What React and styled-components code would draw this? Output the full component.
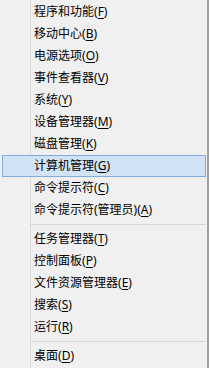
import React from 'react';
import styled, { createGlobalStyle } from 'styled-components';

const GlobalStyle = createGlobalStyle`
  html, body {
    margin: 0;
    padding: 0;
    background: #f0f0f0;
  }
`;

const Menu = styled.div`
  box-sizing: border-box;
  width: 209px;
  height: 368px;
  padding-top: 1px;
  overflow: hidden;
  border-right: 2px solid #a0a0a0;
  background:
    linear-gradient(to right, transparent 30px, #dcdcdc 30px, #dcdcdc 31px, transparent 31px),
    #f0f0f0;
  font-family: "Noto Sans", "Noto Sans CJK SC", sans-serif;
  font-size: 12px;
  color: #000;
`;

const Item = styled.div`
  box-sizing: border-box;
  height: 22px;
  margin: 0 1px 0 2px;
  padding-left: 31px;
  display: flex;
  align-items: center;
  line-height: 20px;
  white-space: nowrap;
  border: 1px solid ${(p) => (p.$active ? '#84abdd' : 'transparent')};
  background: ${(p) => (p.$active ? '#d1e3f5' : 'transparent')};
`;

const Key = styled.span`
  text-decoration: underline;
  text-underline-offset: 2px;
`;

const Separator = styled.div`
  height: 1px;
  margin: 3px 1px 3px 30px;
  background: #d7d7d7;
`;

const groups = [
  [
    ['程序和功能', 'F'],
    ['移动中心', 'B'],
    ['电源选项', 'O'],
    ['事件查看器', 'V'],
    ['系统', 'Y'],
    ['设备管理器', 'M'],
    ['磁盘管理', 'K'],
    ['计算机管理', 'G', true],
    ['命令提示符', 'C'],
    ['命令提示符(管理员)', 'A'],
  ],
  [
    ['任务管理器', 'T'],
    ['控制面板', 'P'],
    ['文件资源管理器', 'E'],
    ['搜索', 'S'],
    ['运行', 'R'],
  ],
  [['桌面', 'D']],
];

export default function App() {
  return (
    <>
      <GlobalStyle />
      <Menu>
        {groups.map((group, gi) => (
          <React.Fragment key={gi}>
            {gi > 0 && <Separator />}
            {group.map(([label, key, active]) => (
              <Item key={label} $active={active}>
                {label}(<Key>{key}</Key>)
              </Item>
            ))}
          </React.Fragment>
        ))}
      </Menu>
    </>
  );
}
